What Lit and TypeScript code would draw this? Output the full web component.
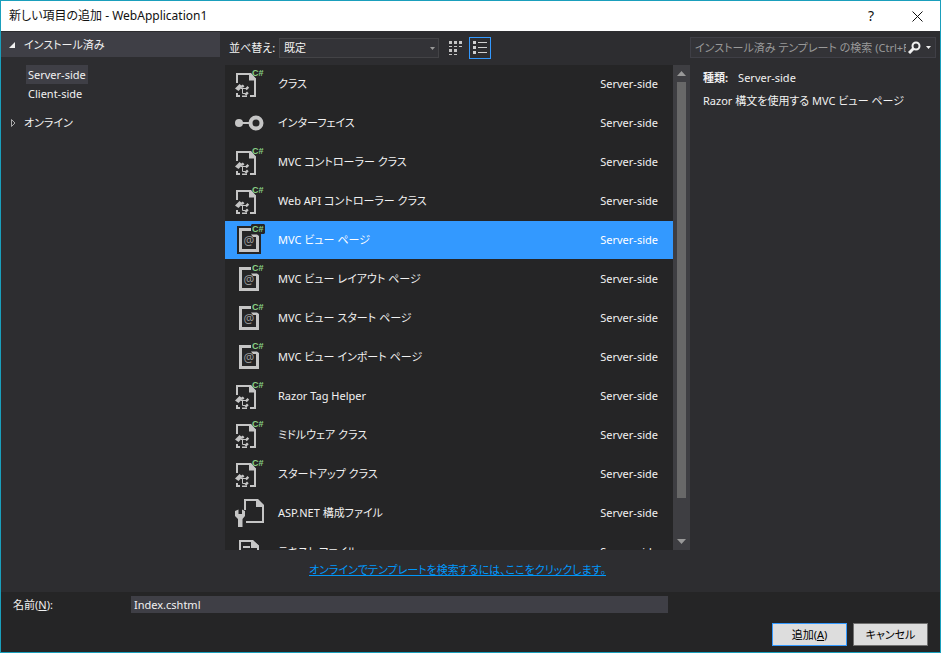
import { LitElement, html, css, svg, nothing } from "lit";
import { customElement, property, state } from "lit/decorators.js";
import { classMap } from "lit/directives/class-map.js";

type IconKind = "class" | "interface" | "view" | "config" | "text";

interface Template {
  name: string;
  icon: IconKind;
}

const TEMPLATES: Template[] = [
  { name: "クラス", icon: "class" },
  { name: "インターフェイス", icon: "interface" },
  { name: "MVC コントローラー クラス", icon: "class" },
  { name: "Web API コントローラー クラス", icon: "class" },
  { name: "MVC ビュー ページ", icon: "view" },
  { name: "MVC ビュー レイアウト ページ", icon: "view" },
  { name: "MVC ビュー スタート ページ", icon: "view" },
  { name: "MVC ビュー インポート ページ", icon: "view" },
  { name: "Razor Tag Helper", icon: "class" },
  { name: "ミドルウェア クラス", icon: "class" },
  { name: "スタートアップ クラス", icon: "class" },
  { name: "ASP.NET 構成ファイル", icon: "config" },
  { name: "テキスト ファイル", icon: "text" },
];

@customElement("template-icon")
export class TemplateIcon extends LitElement {
  @property() kind: IconKind = "class";
  @property({ type: Boolean }) selected = false;

  static styles = css`
    :host { display: block; width: 32px; height: 32px; }
    svg { display: block; overflow: visible; }
    .line { fill: none; stroke: #c5c5c5; stroke-width: 2; }
    .thin { fill: none; stroke: #c5c5c5; stroke-width: 1; }
    .solid { fill: #c5c5c5; }
    .halo { fill: #252526; }
    .lang { fill: #89d185; font: bold 9px "Liberation Sans", sans-serif; }
    .at { fill: #999; font: 12px "Noto Sans", sans-serif; text-anchor: middle; }
  `;

  private lang() {
    return svg`<text class="lang" x="19" y="8">C#</text>`;
  }

  private shape() {
    switch (this.kind) {
      case "class":
        return svg`
          <path class="line" d="M4 15V6H17L22 11V28H17" />
          <path class="solid" d="M16 5h2l5 6v1.500h-7z" />
          <path class="solid" d="M2 20.500 6.500 16l1.800 1.600L9.800 16.500l1.700 1.700-1.600 1.600-1-.3L5.500 23z" />
          <path class="thin" d="M8 20.500h5M9.500 20.500v5h3" />
          <path class="solid" d="M12 20.500l2.500-2.500 1.700 1.700-2.500 2.500zM11.500 26l2.500-2.500 1.700 1.700-2.500 2.500z" />
          <path class="solid" d="M3 25h2v2h2v2H3zM9 27.500h5V29H9z" />
          ${this.lang()}`;
      case "interface":
        return svg`
          <circle class="solid" cx="6" cy="16" r="4" />
          <path class="line" d="M9 16h8" />
          <circle cx="23" cy="16" r="5.500" fill="none" stroke="#c5c5c5" stroke-width="4" />`;
      case "view":
        return svg`
          ${this.selected
            ? svg`<path class="halo" d="M4 2H18V1l1-1H31l1 1V9l-1 1H28V30H4z" />`
            : nothing}
          <path class="solid" fill-rule="evenodd" d="M6 4H18V7H9V25H23V13H20L18 10.500H24L26 12V28H6z" />
          <text class="at" x="16" y="21">@</text>
          ${this.lang()}`;
      case "config":
        return svg`
          <path class="line" d="M12 13V3H24L30 9V25H13" />
          <path class="solid" d="M23 2h2l6 6v2h-8z" />
          <path class="solid" d="M2 14v5l3 3V30h4.500V22l2.500-3v-5l-3-1.500V17H5.500v-4.500z" />`;
      case "text":
        return svg`
          <path class="line" d="M7 29V5H19L25 10V29z" />
          <path class="solid" d="M18 4h2l6 6v2h-8zM10 10h7v2h-7zM10 15h12v2H10zM10 20h12v2H10z" />`;
    }
  }

  render() {
    return html`<svg width="32" height="32" viewBox="0 0 32 32" aria-hidden="true">${this.shape()}</svg>`;
  }
}

@customElement("app-root")
export class AppRoot extends LitElement {
  @state() private selected = 4;

  static styles = css`
    :host {
      display: block;
      height: 100vh;
      color: #f1f1f1;
      font: 11px/16px "Noto Sans", "Noto Sans CJK JP", sans-serif;
      font-feature-settings: "palt";
    }
    * { box-sizing: border-box; }
    button, input, select {
      font: inherit;
      font-feature-settings: inherit;
      color: inherit;
      margin: 0;
      padding: 0;
      border: 0;
      border-radius: 0;
      background: none;
      outline: 0;
      appearance: none;
    }
    svg { display: block; flex: none; }
    .dialog {
      display: flex;
      flex-direction: column;
      height: 100%;
      border: 1px solid #1a9fbc;
      background: #2d2d30;
    }
    .title {
      display: flex;
      align-items: center;
      flex: none;
      height: 30px;
      padding-left: 8px;
      background: #fff;
      color: #111;
    }
    .title h1 { flex: 1; margin: 0; font: inherit; font-size: 12px; }
    .caption {
      display: flex;
      align-items: center;
      justify-content: center;
      width: 46px;
      height: 30px;
    }
    .help { font-size: 14px; }
    .body {
      flex: 1;
      min-height: 0;
      display: grid;
      grid-template-columns: 224px minmax(0, 1fr) 250px;
    }
    .tree { padding: 1px 5px 0 0; }
    .group {
      display: flex;
      align-items: center;
      gap: 7px;
      width: 100%;
      height: 25px;
      padding-left: 7px;
    }
    .group.open { background: #3f3f46; }
    .nodes {
      display: flex;
      flex-direction: column;
      align-items: flex-start;
      padding: 8px 0 7px 25px;
    }
    .node { height: 19px; padding: 0 2px; }
    .node.active { background: #3f3f46; }
    .center { display: flex; flex-direction: column; min-height: 0; }
    .toolbar {
      display: flex;
      align-items: center;
      flex: none;
      height: 34px;
      padding-left: 4px;
    }
    .toolbar label { width: 50px; white-space: nowrap; }
    .combo { display: grid; align-items: center; width: 160px; }
    .combo select, .combo svg { grid-area: 1 / 1; }
    .combo select {
      height: 20px;
      padding-left: 4px;
      border: 1px solid #434346;
      background: #333337;
    }
    .combo svg { justify-self: end; margin-right: 4px; pointer-events: none; }
    .views { display: flex; gap: 2px; margin-left: 6px; }
    .view {
      display: flex;
      align-items: center;
      justify-content: center;
      width: 22px;
      height: 22px;
    }
    .view.on { border: 1px solid #3399ff; }
    .listbox { flex: 1; min-height: 0; display: flex; }
    .items {
      flex: 1;
      min-width: 0;
      margin: 0;
      padding: 0;
      overflow: hidden;
      background: #252526;
      list-style: none;
    }
    .item {
      display: flex;
      align-items: center;
      width: 100%;
      height: 39px;
      padding: 0 15px 1px 8px;
      text-align: left;
      border-bottom: 1px solid #252526;
    }
    .item.selected { background: #3399ff; color: #fff; }
    .item .name { flex: 1; padding-left: 13px; }
    .bar {
      display: flex;
      flex-direction: column;
      align-items: center;
      justify-content: space-between;
      width: 17px;
      padding: 6px 0;
      background: #3e3e42;
    }
    .track { flex: 1; width: 9px; margin: 6px 0 5px; }
    .thumb { height: 92%; background: #686868; }
    .online {
      flex: none;
      height: 42px;
      padding-top: 12px;
      text-align: center;
    }
    .online a { color: #0097fb; }
    .details { padding: 6px 4px 0 0; min-width: 0; }
    .search {
      display: flex;
      align-items: center;
      height: 21px;
      padding: 0 4px;
      border: 1px solid #3f3f46;
      background: #333337;
    }
    .search input { flex: 1; min-width: 0; margin-right: 2px; }
    .search input::placeholder { color: #999; opacity: 1; }
    .search button { display: flex; align-items: center; gap: 5px; }
    .info { margin: 0; padding: 12px 0 0 13px; }
    .info p { margin: 0; }
    .info p + p { margin-top: 7px; }
    .info b { margin-right: 10px; }
    .footer {
      flex: none;
      padding: 4px 12px 6px;
      background: #252526;
    }
    .field { display: flex; align-items: center; margin-right: 260px; }
    .field label { width: 118px; }
    .field input {
      flex: 1;
      min-width: 0;
      height: 17px;
      padding: 0 3px;
      background: #3f3f46;
    }
    .actions {
      display: flex;
      justify-content: flex-end;
      gap: 6px;
      margin-top: 10px;
    }
    .actions button {
      width: 75px;
      height: 23px;
      border: 1px solid #707070;
      background: #ddd;
      color: #000;
    }
    .actions .primary { border-color: #3399ff; }
  `;

  private toolbar() {
    return html`
      <div class="toolbar">
        <label for="sort">並べ替え:</label>
        <span class="combo">
          <select id="sort"><option>既定</option></select>
          <svg width="5" height="3" viewBox="0 0 5 3"><path d="M0 0h5L2.500 3z" fill="#999" /></svg>
        </span>
        <div class="views">
          <button class="view" aria-label="小さいアイコン">
            <svg width="14" height="14" viewBox="0 0 14 14" fill="#c5c5c5">
              <path d="M0 0h3v3H0zM5 0h3v3H5zM10 0h3v3h-3zM0 5h3v1H0zM5 5h3v1H5zM10 5h3v1h-3zM0 8h3v3H0zM5 8h3v3H5zM0 13h3v1H0zM5 13h3v1H5z" />
            </svg>
          </button>
          <button class="view on" aria-label="一覧">
            <svg width="14" height="14" viewBox="0 0 14 14" fill="#d0d0d0">
              <path d="M0 0h3v3H0zM0 5h3v3H0zM0 10h3v3H0zM5 1h9v1H5zM5 6h9v1H5zM5 11h9v1H5z" />
            </svg>
          </button>
        </div>
      </div>`;
  }

  private item(t: Template, i: number) {
    const on = i === this.selected;
    return html`
      <li>
        <button class=${classMap({ item: true, selected: on })} @click=${() => (this.selected = i)}>
          <template-icon .kind=${t.icon} .selected=${on}></template-icon>
          <span class="name">${t.name}</span>
          <span>Server-side</span>
        </button>
      </li>`;
  }

  render() {
    return html`
      <div class="dialog">
        <header class="title">
          <h1>新しい項目の追加 - WebApplication1</h1>
          <button class="caption help">?</button>
          <button class="caption" aria-label="閉じる">
            <svg width="11" height="11" viewBox="0 0 11 11"><path d="M.5.5l10 10M10.500.5l-10 10" stroke="#111" /></svg>
          </button>
        </header>
        <div class="body">
          <nav class="tree">
            <button class="group open">
              <svg width="9" height="8" viewBox="0 0 9 8"><path d="M7 1v6H1z" fill="#f1f1f1" /></svg>
              インストール済み
            </button>
            <div class="nodes">
              <button class="node active">Server-side</button>
              <button class="node">Client-side</button>
            </div>
            <button class="group">
              <svg width="9" height="8" viewBox="0 0 9 8"><path d="M3.500.5v7l3.500-3.500z" fill="none" stroke="#aaa" /></svg>
              オンライン
            </button>
          </nav>
          <main class="center">
            ${this.toolbar()}
            <div class="listbox">
              <ul class="items">${TEMPLATES.map((t, i) => this.item(t, i))}</ul>
              <div class="bar">
                <svg width="9" height="5" viewBox="0 0 9 5"><path d="M0 5h9L4.500 0z" fill="#999" /></svg>
                <div class="track"><div class="thumb"></div></div>
                <svg width="9" height="5" viewBox="0 0 9 5"><path d="M0 0h9L4.500 5z" fill="#999" /></svg>
              </div>
            </div>
            <div class="online"><a href="#">オンラインでテンプレートを検索するには、ここをクリックします。</a></div>
          </main>
          <aside class="details">
            <div class="search">
              <input aria-label="検索" placeholder="インストール済み テンプレート の検索 (Ctrl+E" />
              <button aria-label="検索オプション">
                <svg width="13" height="13" viewBox="0 0 13 13">
                  <circle cx="8" cy="5" r="3.500" fill="none" stroke="#f1f1f1" stroke-width="2" />
                  <path d="M5.500 7.500 1 12" stroke="#f1f1f1" stroke-width="3" />
                </svg>
                <svg width="5" height="3" viewBox="0 0 5 3"><path d="M0 0h5L2.500 3z" fill="#f1f1f1" /></svg>
              </button>
            </div>
            <div class="info">
              <p><b>種類:</b>Server-side</p>
              <p>Razor 構文を使用する MVC ビュー ページ</p>
            </div>
          </aside>
        </div>
        <footer class="footer">
          <div class="field">
            <label for="name">名前(<u>N</u>):</label>
            <input id="name" .value=${"Index.cshtml"} />
          </div>
          <div class="actions">
            <button class="primary">追加(<u>A</u>)</button>
            <button>キャンセル</button>
          </div>
        </footer>
      </div>`;
  }
}
